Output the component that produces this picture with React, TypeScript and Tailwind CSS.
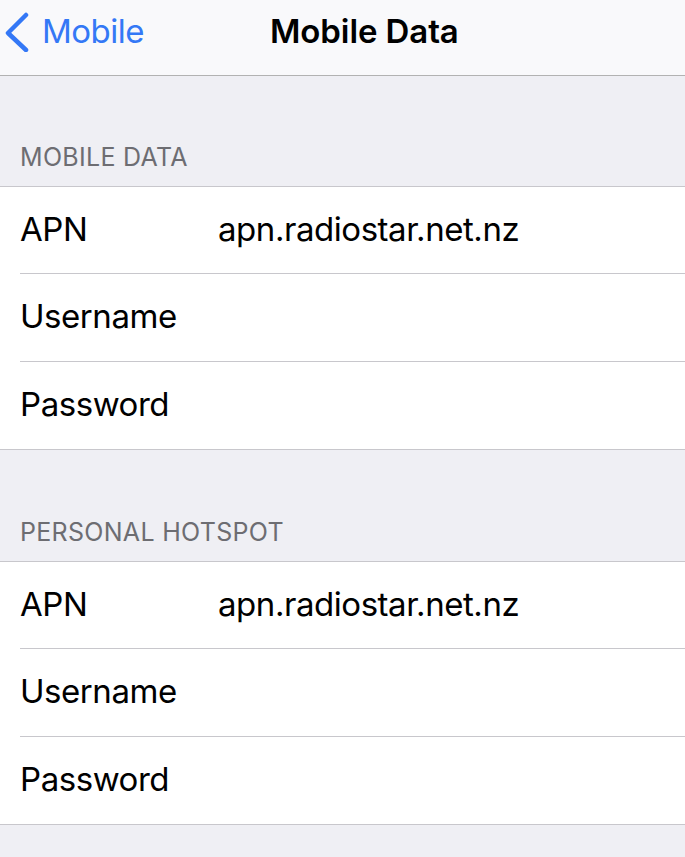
import React from "react";

const font = { fontFamily: "Inter, 'Noto Sans', sans-serif" };

function Row({ label, value, h, last }: { label: string; value?: string; h: string; last?: boolean }) {
  return (
    <div className={`pl-[20px] ${h}`}>
      <div className={`h-full flex items-center pb-[2px] ${last ? "" : "border-b border-[#c8c7cc]"}`}>
        <div className="w-[198px] text-[33px] leading-none text-black tracking-[-0.45px]">{label}</div>
        {value && <div className="text-[33px] leading-none text-black tracking-[-0.45px]">{value}</div>}
      </div>
    </div>
  );
}

function Section({ title, gap }: { title: string; gap: string }) {
  return (
    <div>
      <div className={`${gap} flex items-end pl-[20px] pb-[16px]`}>
        <div className="text-[25px] leading-none text-[#6d6d72] tracking-[0.3px]">{title}</div>
      </div>
      <div className="bg-white border-y border-[#c8c7cc]">
        <Row label="APN" value="apn.radiostar.net.nz" h="h-[87px]" />
        <Row label="Username" h="h-[88px]" />
        <Row label="Password" h="h-[87px]" last />
      </div>
    </div>
  );
}

export default function App() {
  return (
    <div className="w-[685px] h-[857px] bg-[#efeff4] overflow-hidden" style={font}>
      <div className="h-[76px] bg-[#f9f9fb] border-b border-[#b2b2b2] flex items-center pb-[12px]">
        <div className="flex items-center text-[#3478f6]">
          <svg width="30" height="40" viewBox="0 0 30 40" className="ml-[3px]">
            <polyline points="23,3 5,21 23,38" fill="none" stroke="#3478f6" strokeWidth="4.5" strokeLinecap="round" strokeLinejoin="round" />
          </svg>
          <span className="ml-[9px] text-[33px] leading-none tracking-[-0.5px]">Mobile</span>
        </div>
        <div className="ml-[126px] text-[33px] leading-none font-semibold text-black tracking-[-0.1px]">Mobile Data</div>
      </div>
      <Section title="MOBILE DATA" gap="h-[110px]" />
      <Section title="PERSONAL HOTSPOT" gap="h-[111px]" />
    </div>
  );
}
